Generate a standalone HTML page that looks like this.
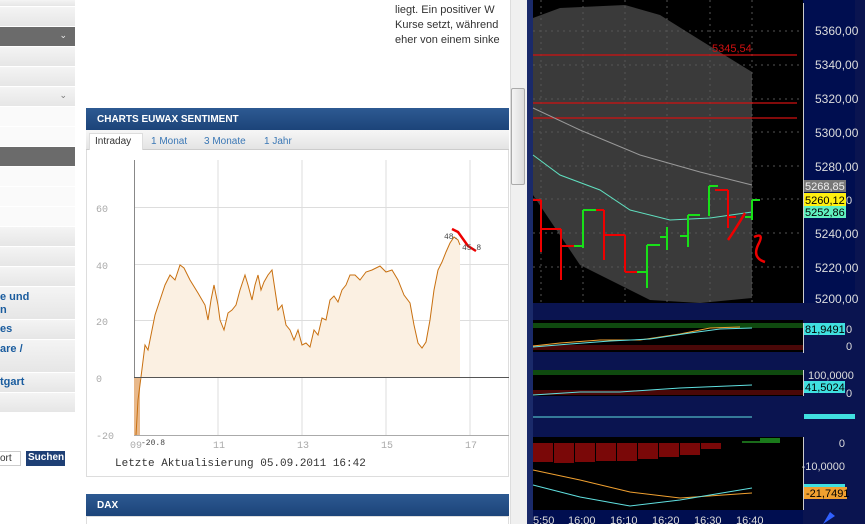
<!DOCTYPE html>
<html><head><meta charset="utf-8"><style>
*{margin:0;padding:0;box-sizing:border-box}
body{width:865px;height:524px;overflow:hidden;background:#fff;font-family:"Liberation Sans",sans-serif;position:relative}
.r{position:absolute;left:0;width:75px;height:20px;background:linear-gradient(#f4f4f4,#e6e6e6);border-bottom:1px solid #fff}
.d{background:#6b6b6b}
.ch{position:absolute;right:8px;top:3px;font-size:9px;color:#eee}
.b{position:absolute;left:0;font:bold 11px "Liberation Sans",sans-serif;color:#1a5c9e;line-height:13px}
.abs{position:absolute}
</style></head><body>
<!-- sidebar -->
<div class="r" style="top:0;height:7px"></div>
<div class="r" style="top:7px"></div>
<div class="r d" style="top:27px"><span class="ch">&#8964;</span></div>
<div class="r" style="top:47px"></div>
<div class="r" style="top:67px"></div>
<div class="r" style="top:87px"><span class="ch" style="color:#777">&#8964;</span></div>
<div class="r" style="top:107px;background:#fafafa"></div>
<div class="r" style="top:127px;background:#fafafa"></div>
<div class="r d" style="top:147px"></div>
<div class="r" style="top:167px;background:#fafafa"></div>
<div class="r" style="top:187px;background:#fafafa"></div>
<div class="r" style="top:207px;background:#fafafa"></div>
<div class="r" style="top:227px"></div>
<div class="r" style="top:247px"></div>
<div class="r" style="top:267px"></div>
<div class="r" style="top:287px;height:33px"><span class="b" style="top:4px">e und<br>n</span></div>
<div class="r" style="top:320px"><span class="b" style="top:3px">es</span></div>
<div class="r" style="top:340px;height:33px"><span class="b" style="top:3px">are /</span></div>
<div class="r" style="top:373px"><span class="b" style="top:3px">tgart</span></div>
<div class="r" style="top:393px"></div>
<div class="abs" style="left:0;top:451px;width:21px;height:15px;border:1px solid #ccc;border-left:none;font-size:10px;padding-top:1px;color:#333">ort</div>
<div class="abs" style="left:26px;top:451px;width:39px;height:15px;background:#1e3f75;color:#fff;font-size:10px;font-weight:bold;padding:1px 0 0 2px">Suchen</div>
<!-- text -->
<div class="abs" style="left:395px;top:3px;font-size:11px;line-height:15px;color:#333;width:115px;overflow:hidden;white-space:nowrap">liegt. Ein positiver W<br>Kurse setzt, während<br>eher von einem sinke</div>
<!-- chart box -->
<div class="abs" style="left:86px;top:108px;width:423px;height:22px;background:linear-gradient(#2d5a92,#1c4479);color:#fff;font-weight:bold;font-size:10px;padding:6px 0 0 11px">CHARTS EUWAX SENTIMENT</div>
<div class="abs" style="left:86px;top:130px;width:423px;height:347px;border:1px solid #ddd;border-top:none"></div>
<div class="abs" style="left:86px;top:130px;width:423px;height:20px;background:linear-gradient(#f6f6f6,#e4e4e4);border-bottom:1px solid #ccc;font-size:10px;color:#3a77b5">
<span class="abs" style="left:3px;top:3px;width:54px;height:17px;background:#fff;border:1px solid #ddd;border-bottom:none;color:#333;padding:2px 0 0 5px">Intraday</span>
<span class="abs" style="left:65px;top:6px">1 Monat</span><span class="abs" style="left:118px;top:6px">3 Monate</span><span class="abs" style="left:178px;top:6px">1 Jahr</span></div>
<svg class="abs" style="left:86px;top:150px" width="424" height="330" viewBox="86 150 424 330">
<g stroke="#ddd" stroke-width="1">
<line x1="218" y1="160" x2="218" y2="435"/><line x1="302" y1="160" x2="302" y2="435"/><line x1="386" y1="160" x2="386" y2="435"/><line x1="470" y1="160" x2="470" y2="435"/>
<line x1="134" y1="207.5" x2="509" y2="207.5"/><line x1="134" y1="264.5" x2="509" y2="264.5"/><line x1="134" y1="320.5" x2="509" y2="320.5"/>
</g>
<line x1="134.5" y1="160" x2="134.5" y2="436" stroke="#888"/>
<line x1="134" y1="435.5" x2="509" y2="435.5" stroke="#aaa"/>
<path d="M136,435 L138,400 141,377 145,345 148,350 152,330 155,315 160,300 165,285 170,275 175,280 180,265 184,268 190,280 198,293 205,305 208,320 211,300 214,285 218,305 220,320 224,330 228,313 232,310 236,305 240,290 245,275 248,285 252,300 255,285 258,275 261,290 264,282 268,275 272,270 275,290 278,310 282,305 286,325 290,330 294,340 298,330 302,345 306,343 310,347 314,330 318,335 322,318 326,320 330,300 334,296 338,302 342,290 346,285 350,275 355,275 360,280 366,272 372,270 380,266 386,272 392,270 398,280 404,295 410,303 414,325 418,343 422,348 426,342 430,320 434,290 438,270 442,262 446,252 450,243 454,237 458,240 460,245 L460,377 L141,377 Z" fill="#fbf0e2"/>
<rect x="134" y="377" width="6" height="58" fill="#e8b88a"/>
<path d="M136,435 L138,400 141,377 145,345 148,350 152,330 155,315 160,300 165,285 170,275 175,280 180,265 184,268 190,280 198,293 205,305 208,320 211,300 214,285 218,305 220,320 224,330 228,313 232,310 236,305 240,290 245,275 248,285 252,300 255,285 258,275 261,290 264,282 268,275 272,270 275,290 278,310 282,305 286,325 290,330 294,340 298,330 302,345 306,343 310,347 314,330 318,335 322,318 326,320 330,300 334,296 338,302 342,290 346,285 350,275 355,275 360,280 366,272 372,270 380,266 386,272 392,270 398,280 404,295 410,303 414,325 418,343 422,348 426,342 430,320 434,290 438,270 442,262 446,252 450,243 454,237 458,240 460,245" fill="none" stroke="#c87010" stroke-width="1"/>
<line x1="134" y1="377.5" x2="509" y2="377.5" stroke="#555"/>
<path d="M452,229 L458,232 468,246 476,251" stroke="#e00" stroke-width="2.5" fill="none"/>
<g font-family="Liberation Mono,monospace" font-size="10" fill="#aaa">
<text x="96" y="212">60</text><text x="96" y="269">40</text><text x="96" y="325">20</text><text x="96" y="382">0</text><text x="96" y="439">-20</text>
<text x="130" y="448">09</text><text x="213" y="448">11</text><text x="297" y="448">13</text><text x="381" y="448">15</text><text x="465" y="448">17</text>
</g>
<g font-family="Liberation Mono,monospace" font-size="8" fill="#444"><text x="141" y="445">-20.8</text><text x="444" y="239">48.</text><text x="462" y="250">45.8</text></g>
<text x="115" y="466" font-family="Liberation Mono,monospace" font-size="11" fill="#333">Letzte Aktualisierung 05.09.2011 16:42</text>
</svg>
<div class="abs" style="left:86px;top:494px;width:423px;height:22px;background:linear-gradient(#2d5a92,#1c4479);color:#fff;font-weight:bold;font-size:10px;padding:6px 0 0 11px">DAX</div>
<div class="abs" style="left:86px;top:516px;width:423px;height:8px;border:1px solid #ddd;border-bottom:none"></div>
<!-- scrollbar -->
<div class="abs" style="left:510px;top:0;width:17px;height:524px;background:#f0f0f0;border-left:1px solid #ddd"></div>
<div class="abs" style="left:511px;top:88px;width:14px;height:97px;background:linear-gradient(90deg,#f4f4f4,#dcdcdc);border:1px solid #aaa;border-radius:2px"></div>
<!-- right panel -->
<svg class="abs" style="left:527px;top:0" width="338" height="524" viewBox="527 0 338 524">
<rect x="527" y="0" width="338" height="524" fill="#0a1450"/>
<rect x="527" y="0" width="6" height="524" fill="#1a2a6a"/>
<rect x="533" y="0" width="270" height="303" fill="#000"/>
<path d="M533,18 L560,8 625,5 660,15 700,40 752,72 L752,298 700,303 650,300 620,285 580,265 533,195 Z" fill="#3a3a3a"/>
<g stroke="#555" stroke-dasharray="2,4"><line x1="541" y1="0" x2="541" y2="303"/><line x1="583" y1="0" x2="583" y2="303"/><line x1="625" y1="0" x2="625" y2="303"/><line x1="667" y1="0" x2="667" y2="303"/><line x1="710" y1="0" x2="710" y2="303"/><line x1="752" y1="0" x2="752" y2="303"/>
<line x1="533" y1="31" x2="803" y2="31"/><line x1="533" y1="65" x2="803" y2="65"/><line x1="533" y1="99" x2="803" y2="99"/><line x1="533" y1="132" x2="803" y2="132"/><line x1="533" y1="166" x2="803" y2="166"/><line x1="533" y1="199" x2="803" y2="199"/><line x1="533" y1="233" x2="803" y2="233"/><line x1="533" y1="267" x2="803" y2="267"/></g>
<g stroke="#d01010" stroke-width="1.2"><line x1="533" y1="55" x2="797" y2="55"/><line x1="533" y1="103" x2="797" y2="103"/><line x1="533" y1="118" x2="797" y2="118"/></g>
<text x="712" y="52" font-size="11" fill="#d01010">5345,54</text>
<path d="M533,108 L580,130 640,155 700,172 752,185" stroke="#999" fill="none"/>
<path d="M533,155 L560,175 600,190 630,210 670,220 710,218 752,212" stroke="#60e0c0" fill="none"/>
<g stroke="#e00" stroke-width="2" fill="none">
<path d="M541,200 V252 M533,200H541 M541,229H561 M561,229V280 M561,246H574 M604,210V260 M590,210H604 M604,235H625 M625,235V272 M625,272H637 M728,190V228 M715,190H728 M728,217H736"/>
<path d="M745,213 Q735,230 728,240 M754,237 Q765,232 758,245 Q752,258 765,262" stroke-width="2.5"/>
</g>
<g stroke="#18e018" stroke-width="2" fill="none">
<path d="M583,210V248 M583,210H596 M583,246H574 M647,245V288 M637,272H647 M647,245H660 M667,227V250 M660,237H667 M688,215V247 M680,236H688 M688,215H700 M709,186V216 M709,186H718 M752,200V220 M752,200H760 M745,217H752"/>
</g>
<rect x="803" y="0" width="52" height="303" fill="#000e50"/>
<line x1="803.5" y1="3" x2="803.5" y2="303" stroke="#ccc"/>
<g font-size="12" fill="#ddd"><text x="815" y="35">5360,00</text><text x="815" y="69">5340,00</text><text x="815" y="103">5320,00</text><text x="815" y="137">5300,00</text><text x="815" y="171">5280,00</text><text x="815" y="238">5240,00</text><text x="815" y="272">5220,00</text><text x="815" y="303">5200,00</text></g>
<rect x="804" y="180" width="42" height="12" fill="#777"/><text x="805" y="190" font-size="11" fill="#eee">5268,85</text>
<rect x="804" y="193" width="42" height="13" fill="#ffef10"/><text x="805" y="204" font-size="11" fill="#000">5260,12</text><text x="846" y="204" font-size="11" fill="#ddd">0</text>
<rect x="804" y="206" width="42" height="12" fill="#60f0c0"/><text x="805" y="216" font-size="11" fill="#000">5252,86</text>
<!-- panel 1 -->
<rect x="533" y="320" width="270" height="32" fill="#000"/>
<rect x="533" y="323" width="270" height="5" fill="#0f4a0f"/><rect x="533" y="345" width="270" height="5" fill="#4a0808"/>
<path d="M533,346 L560,343 600,340 640,340 680,334 710,328 740,327" stroke="#f0a030" fill="none"/>
<path d="M533,347 L570,344 610,341 650,339 690,333 720,329 752,328" stroke="#60e0e0" fill="none"/>
<rect x="803" y="323" width="1" height="30" fill="#ccc"/>
<rect x="804" y="323" width="41" height="12" fill="#40e0e0"/><text x="805" y="333" font-size="11" fill="#000">81,9491</text><text x="846" y="333" font-size="11" fill="#ddd">0</text><text x="846" y="350" font-size="11" fill="#ddd">0</text>
<!-- panel 2 -->
<rect x="533" y="370" width="270" height="26" fill="#000"/>
<rect x="533" y="370" width="270" height="5" fill="#0f4a0f"/><rect x="533" y="390" width="270" height="5" fill="#4a0808"/>
<path d="M533,395 L580,392 620,392 680,388 752,385" stroke="#60e0e0" fill="none"/>
<rect x="803" y="370" width="1" height="26" fill="#ccc"/>
<text x="808" y="379" font-size="11" fill="#ddd">100,0000</text>
<rect x="804" y="381" width="41" height="12" fill="#40e0e0"/><text x="805" y="391" font-size="11" fill="#000">41,5024</text><text x="846" y="397" font-size="11" fill="#ddd">0</text>
<!-- panel 3 -->
<line x1="533" y1="417" x2="752" y2="417" stroke="#60e0e0"/>
<rect x="804" y="414" width="51" height="5" fill="#40e0e0"/>
<!-- panel 4 -->
<rect x="533" y="437" width="270" height="73" fill="#000"/>
<g fill="#7a0808"><rect x="533" y="443" width="20" height="19"/><rect x="554" y="443" width="20" height="20"/><rect x="575" y="443" width="20" height="19"/><rect x="596" y="443" width="20" height="18"/><rect x="617" y="443" width="20" height="18"/><rect x="638" y="443" width="20" height="16"/><rect x="659" y="443" width="20" height="14"/><rect x="680" y="443" width="20" height="12"/><rect x="701" y="443" width="20" height="6"/></g>
<rect x="742" y="441" width="18" height="2" fill="#1a6a1a"/><rect x="760" y="438" width="20" height="5" fill="#1a7a1a"/>
<path d="M533,470 L580,480 630,492 680,498 752,493" stroke="#f0a030" fill="none"/>
<path d="M533,485 L580,497 630,506 680,500 752,488" stroke="#60e0e0" fill="none"/>
<rect x="803" y="437" width="1" height="73" fill="#ccc"/>
<text x="845" y="447" font-size="11" fill="#ddd" text-anchor="end">0</text><text x="845" y="470" font-size="11" fill="#ddd" text-anchor="end">-10,0000</text>
<rect x="804" y="484" width="41" height="6" fill="#40e0e0"/>
<rect x="804" y="487" width="43" height="12" fill="#f0a030"/><text x="806" y="497" font-size="11" fill="#000">-21,7491</text>
<!-- time axis -->
<rect x="533" y="510" width="270" height="14" fill="#000e50"/>
<g font-size="11" fill="#ddd"><text x="533" y="524">5:50</text><text x="568" y="524">16:00</text><text x="610" y="524">16:10</text><text x="652" y="524">16:20</text><text x="694" y="524">16:30</text><text x="736" y="524">16:40</text></g>
<path d="M823,524 L830,512 835,516 Z" fill="#3060ff"/>
</svg>
</body></html>
